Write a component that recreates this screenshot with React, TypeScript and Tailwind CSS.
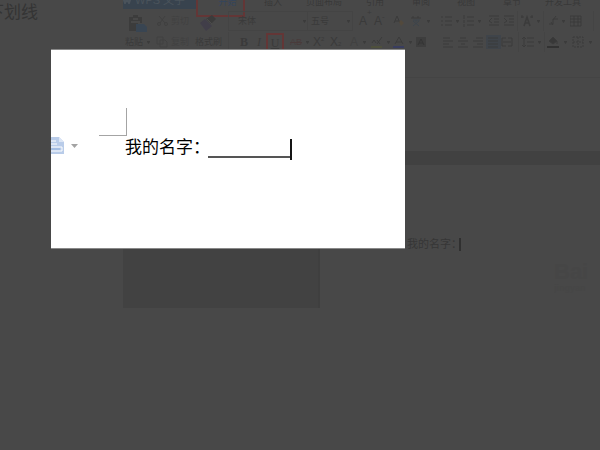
import type { ReactNode } from "react";

const cjk = "font-['Liberation_Sans','Noto_Sans_CJK_SC',sans-serif]";

function Tool({ label, className, children }: { label: string; className: string; children: ReactNode }) {
  return (
    <button type="button" aria-label={label} className={`flex shrink-0 items-center whitespace-nowrap ${className}`}>
      {children}
    </button>
  );
}

function Icon({ children, color = "#3b3b3b" }: { children: ReactNode; color?: string }) {
  return (
    <svg width="12" height="12" viewBox="0 0 12 12" fill="none" stroke={color} strokeWidth="1" className="shrink-0">
      {children}
    </svg>
  );
}

function Caret() {
  return (
    <svg width="5" height="3" viewBox="0 0 5 3" className="shrink-0" fill="#3b3b3b">
      <path d="M1 0h3v1L2.5 3 1 1z" />
    </svg>
  );
}

function Separator({ className }: { className: string }) {
  return <span className={`h-5 shrink-0 border-l border-[#444444] ${className}`} />;
}

function Tabs() {
  return (
    <nav className="-mt-[5px] flex h-[15px] items-start whitespace-nowrap text-[9px] leading-[14px] text-[#383838]">
      <button type="button" className="flex h-[14px] w-[75px] shrink-0 items-start gap-[4px] bg-[#38434e] text-[11px] leading-[10px] text-[#4a535b]">
        <svg width="8" height="9" viewBox="0 0 8 9" fill="none" stroke="#4a535b" strokeWidth="2"><path d="M0 2l2 6 2-4 2 4 2-6" /></svg>
        WPS 文字
      </button>
      <button type="button" className="-ml-[2px] flex h-[22px] w-[49px] shrink-0 items-start justify-center border-2 border-t-0 border-[#633636] pl-[14px] text-[#34455c]">
        开始
      </button>
      <button type="button" className="w-[61px] shrink-0 pl-[19px] text-left">插入</button>
      <button type="button" className="w-[60px] shrink-0 text-left">页面布局</button>
      <button type="button" className="w-[46px] shrink-0 text-left">引用</button>
      <button type="button" className="w-[45px] shrink-0 text-left">审阅</button>
      <button type="button" className="w-[46px] shrink-0 text-left">视图</button>
      <button type="button" className="w-[42px] shrink-0 text-left">章节</button>
      <button type="button" className="shrink-0">开发工具</button>
    </nav>
  );
}

function TopTools() {
  return (
    <div className="flex h-[22px] items-center pl-[6px]">
      <Tool label="粘贴" className="w-[28px] self-end">
        <svg width="18" height="17" viewBox="0 0 18 17">
          <path d="M0 2h4V0h5v2h4v6H9v8H0z" fill="#3c3c3c" />
          <path d="M4 3h5v2H4zM2 6h9v2H2z" fill="#484848" />
          <path d="M7 9h8l3 3v5H7z" fill="#394552" />
        </svg>
      </Tool>
      <Tool label="剪切" className="w-[43px] gap-[2px] text-[#414141]">
        <Icon color="#404040"><path d="M2 1l6 7M8 1L3 8" /><circle cx="2" cy="9" r="1.5" /><circle cx="9" cy="9" r="1.5" /></Icon>
        <span>剪切</span>
      </Tool>
      <Tool label="格式刷" className="w-[28px] self-end">
        <svg width="18" height="17" viewBox="0 0 18 17">
          <path d="M12 0l4 4-5 5-5-5z" fill="#3b3b3b" />
          <path d="M5 4l7 7-6 5-6-8z" fill="#413e49" />
          <path d="M7 4l5 5" stroke="#4b4b4b" />
        </svg>
      </Tool>
      <label className="flex h-5 w-[80px] shrink-0 items-center border border-[#444444] pl-[9px]">
        <select aria-label="字体" className="w-[65px] appearance-none bg-transparent"><option>宋体</option></select>
        <Caret />
      </label>
      <label className="flex h-5 w-[45px] shrink-0 items-center border border-l-0 border-[#444444] pl-[3px]">
        <select aria-label="字号" className="w-[35px] appearance-none bg-transparent"><option>五号</option></select>
        <Caret />
      </label>
      <Tool label="增大字号" className="ml-[6px] w-[15px] items-start text-[12px] leading-[12px]">A<sup className="text-[8px] leading-[4px]">+</sup></Tool>
      <Tool label="减小字号" className="w-[19px] text-[12px] leading-[12px]">A<sup className="text-[8px] leading-[4px]">-</sup></Tool>
      <Tool label="清除格式" className="w-[17px]">
        <Icon><path d="M1 8l3-7 3 7M2 6h4" /><path d="M6 7l2-2 3 3-3 3z" fill="#52493c" stroke="none" /></Icon>
      </Tool>
      <Tool label="拼音指南" className="w-[31px] gap-[4px]">
        <Icon><path d="M1 3h10M3 1v2M8 1v2" /><path d="M3 5h7M6 5v2M3 11l6-5M3 6l6 5" stroke="#3c444c" /></Icon>
        <Caret />
      </Tool>
      <Tool label="项目符号" className="w-[22px] gap-[2px]">
        <Icon><path d="M0 2h2M4 2h7M0 6h2M4 6h7M0 10h2M4 10h7" /></Icon><Caret />
      </Tool>
      <Tool label="编号" className="w-[25px] gap-[2px]">
        <Icon><path d="M1 0v4M1 5v3M1 9v3M4 2h7M4 6h7M4 10h7" /></Icon><Caret />
      </Tool>
      <Tool label="减少缩进" className="w-[15px]"><Icon><path d="M1 1h10M6 4h5M6 7h5M1 10h10M4 3L1 6l3 2" /></Icon></Tool>
      <Tool label="增加缩进" className="w-[14px]"><Icon><path d="M1 1h10M6 4h5M6 7h5M1 10h10M1 3l3 3-3 2" /></Icon></Tool>
      <Separator className="w-[4px]" />
      <Tool label="中文版式" className="w-[22px] gap-[3px]">
        <Icon><path d="M3 11l3-9 3 9M4 8h4" strokeWidth="1.5" /><path d="M0 2h3M9 2h3M1 0v3M11 0v3" /></Icon><Caret />
      </Tool>
      <Separator className="w-[4px]" />
      <Tool label="制表位" className="w-[23px] gap-[2px]">
        <Icon><path d="M2 9h4V4h5M4 7l2 3M9 1L6 5" /></Icon><Caret />
      </Tool>
      <Tool label="插入表格" className="w-[23px]"><Icon><path d="M0 1h11v10H0zM0 4h11M0 7h11M4 1v10M8 1v10" /></Icon></Tool>
      <Separator className="w-[1px]" />
    </div>
  );
}

function BottomTools() {
  return (
    <div className="flex h-5 items-center pl-[2px]">
      <Tool label="粘贴选项" className="w-[31px] gap-[3px]"><span>粘贴</span><Caret /></Tool>
      <Tool label="复制" className="w-[39px] gap-[3px] text-[#414141]">
        <Icon color="#404040"><path d="M1 1h6v7H1zM4 4h5l2 2v5H4z" /></Icon><span>复制</span>
      </Tool>
      <Tool label="格式刷" className="w-[33px]">格式刷</Tool>
      <Separator className="w-[8px]" />
      <Tool label="加粗" className="w-[16px] justify-center font-['Liberation_Serif',serif] text-[12px] font-bold">B</Tool>
      <Tool label="倾斜" className="w-[14px] justify-center font-['Liberation_Serif',serif] text-[12px] italic">I</Tool>
      <button type="button" aria-label="下划线" className="flex h-[19px] w-[18px] shrink-0 items-center justify-center self-end border-2 border-[#633636] font-['Liberation_Serif',serif] text-[12px] leading-[12px] underline">
        U
      </button>
      <Tool label="删除线" className="ml-[6px] w-[23px] gap-[3px]"><span className="text-[9px] text-[#493b3b] line-through">AB</span><Caret /></Tool>
      <Tool label="上标" className="w-[17px] text-[12px]">X<sup className="text-[6px]">2</sup></Tool>
      <Tool label="下标" className="w-[20px] text-[12px]">X<sub className="text-[6px]">2</sub></Tool>
      <Tool label="文字效果" className="w-[21px] gap-[4px] text-[12px] text-[#414141]">A<Caret /></Tool>
      <Tool label="突出显示" className="w-[22px] gap-[3px]">
        <Icon><path d="M1 7l2-3 2 3M6 8l5-7M6 4l3 4" /><path d="M0 11h11" stroke="#4e503c" strokeWidth="2" /></Icon><Caret />
      </Tool>
      <Tool label="字体颜色" className="w-[23px] gap-[3px]">
        <Icon><path d="M2 8l4-7 4 7M3 6h6" /><path d="M0 11h11" stroke="#393d5f" strokeWidth="2" /></Icon><Caret />
      </Tool>
      <Tool label="字符底纹" className="w-[27px]">
        <Icon><path d="M0 1h10v10H0z" fill="#3e3e3e" stroke="none" /><path d="M2 9l3-6 3 6M3 7h4" stroke="#343434" /></Icon>
      </Tool>
      <Tool label="左对齐" className="w-[15px]"><Icon><path d="M0 2h7M0 5h10M0 8h6M0 11h10" /></Icon></Tool>
      <Tool label="居中对齐" className="w-[15px]"><Icon><path d="M2 2h6M0 5h10M3 8h4M0 11h10" /></Icon></Tool>
      <Tool label="右对齐" className="w-[13px]"><Icon><path d="M3 2h7M0 5h10M4 8h6M0 11h10" /></Icon></Tool>
      <Tool label="两端对齐" className="h-[14px] w-[15px] bg-[#3f444a] pl-[2px]"><Icon><path d="M0 2h10M0 5h10M0 8h10M0 11h10" /></Icon></Tool>
      <Tool label="分散对齐" className="w-[17px]"><Icon><path d="M1 2v8M11 2v8M1 2h4M7 2h4M2 6h8M1 10h4M7 10h4" /></Icon></Tool>
      <Separator className="w-[4px]" />
      <Tool label="行距" className="w-[22px] gap-[3px]"><Icon><path d="M2 1v10M0 3l2-2 2 2M0 9l2 2 2-2M5 2h7M5 6h7M5 10h7" /></Icon><Caret /></Tool>
      <Separator className="w-[3px]" />
      <Tool label="底纹颜色" className="w-[25px] gap-[4px]">
        <Icon><path d="M2 5l4-4 4 4-4 3zM10 5v3" fill="#383838" /><path d="M0 11h12" stroke="#323232" strokeWidth="2" /></Icon><Caret />
      </Tool>
      <Tool label="边框" className="gap-[4px]"><Icon><path d="M1 1h10v10H1zM1 6h10M6 1v10" strokeDasharray="2 1" /></Icon><Caret /></Tool>
    </div>
  );
}

function EditorWindow() {
  return (
    <section aria-label="WPS 文字" className="min-w-0 flex-1 overflow-hidden">
      <Tabs />
      <div role="toolbar" aria-label="开始" className="h-[68px] border-b border-[#444444] text-[9px] leading-[12px] text-[#3a3a3a]">
        <TopTools />
        <BottomTools />
      </div>
      <div className="flex h-[230px]">
        <div className="w-[197px] shrink-0 border-r-2 border-[#3f3f3f] bg-[#424242]" />
        <div className="min-w-0 flex-1">
          <div className="h-[73px]" />
          <div className="h-[14px] bg-[#414141]" />
          <div className="flex items-start justify-between pt-[72px]">
            <p className="flex items-center pl-[87px] text-[11px] leading-[14px] text-[#363636]">
              我的名字：
              <span className="-ml-[3px] h-[13px] w-[2px] bg-[#303030]" />
            </p>
            <div className="mt-[24px] w-[46px] overflow-hidden text-[22px] font-bold leading-[22px] text-[#464646]">
              Bai
              <div className="text-[9px] leading-[10px]">jingyan</div>
            </div>
          </div>
        </div>
      </div>
    </section>
  );
}

function Preview() {
  return (
    <div role="dialog" aria-label="预览" className="absolute left-[51px] top-[49px] h-[200px] w-[354px] border-y border-[#888888] bg-white pt-[58px] text-black">
      <div className="h-[28px] w-[76px] pl-[48px]">
        <div className="h-full border-b border-r border-[#a4a4a4]" />
      </div>
      <div className="flex h-[24px] items-end">
        <button type="button" aria-label="粘贴选项" className="flex w-[74px] shrink-0 items-center gap-[7px] self-start">
          <svg width="13" height="19" viewBox="0 0 13 19">
            <path d="M0 1h8l5 5v12H0z" fill="#b9cce9" />
            <path d="M8 1v5h5z" fill="#dce6f5" />
            <path d="M0 5h5M0 8h6M0 11h11M0 15h11M11 11v4" stroke="#ffffff" />
            <path d="M0 13h9" stroke="#8eaedb" />
          </svg>
          <svg width="7" height="4" viewBox="0 0 7 4"><path d="M0 0h7L3.5 4z" fill="#a3a3a3" /></svg>
        </button>
        <span className="w-[83px] shrink-0 whitespace-nowrap text-[17px] leading-[24px]">我的名字：</span>
        <span className="flex h-[21px] w-[84px] items-start border-r-2 border-[#151515]">
          <span className="h-[19px] w-full border-b-2 border-[#555555]" />
        </span>
      </div>
    </div>
  );
}

export default function App() {
  return (
    <main lang="zh-CN" className={`relative flex min-h-screen overflow-hidden bg-[#484848] ${cjk}`}>
      <aside className="w-[123px] shrink-0">
        <h1 className="flex w-[38px] justify-end overflow-hidden whitespace-nowrap text-[17px] leading-[26px] text-[#343434]">下划线</h1>
      </aside>
      <EditorWindow />
      <Preview />
    </main>
  );
}
